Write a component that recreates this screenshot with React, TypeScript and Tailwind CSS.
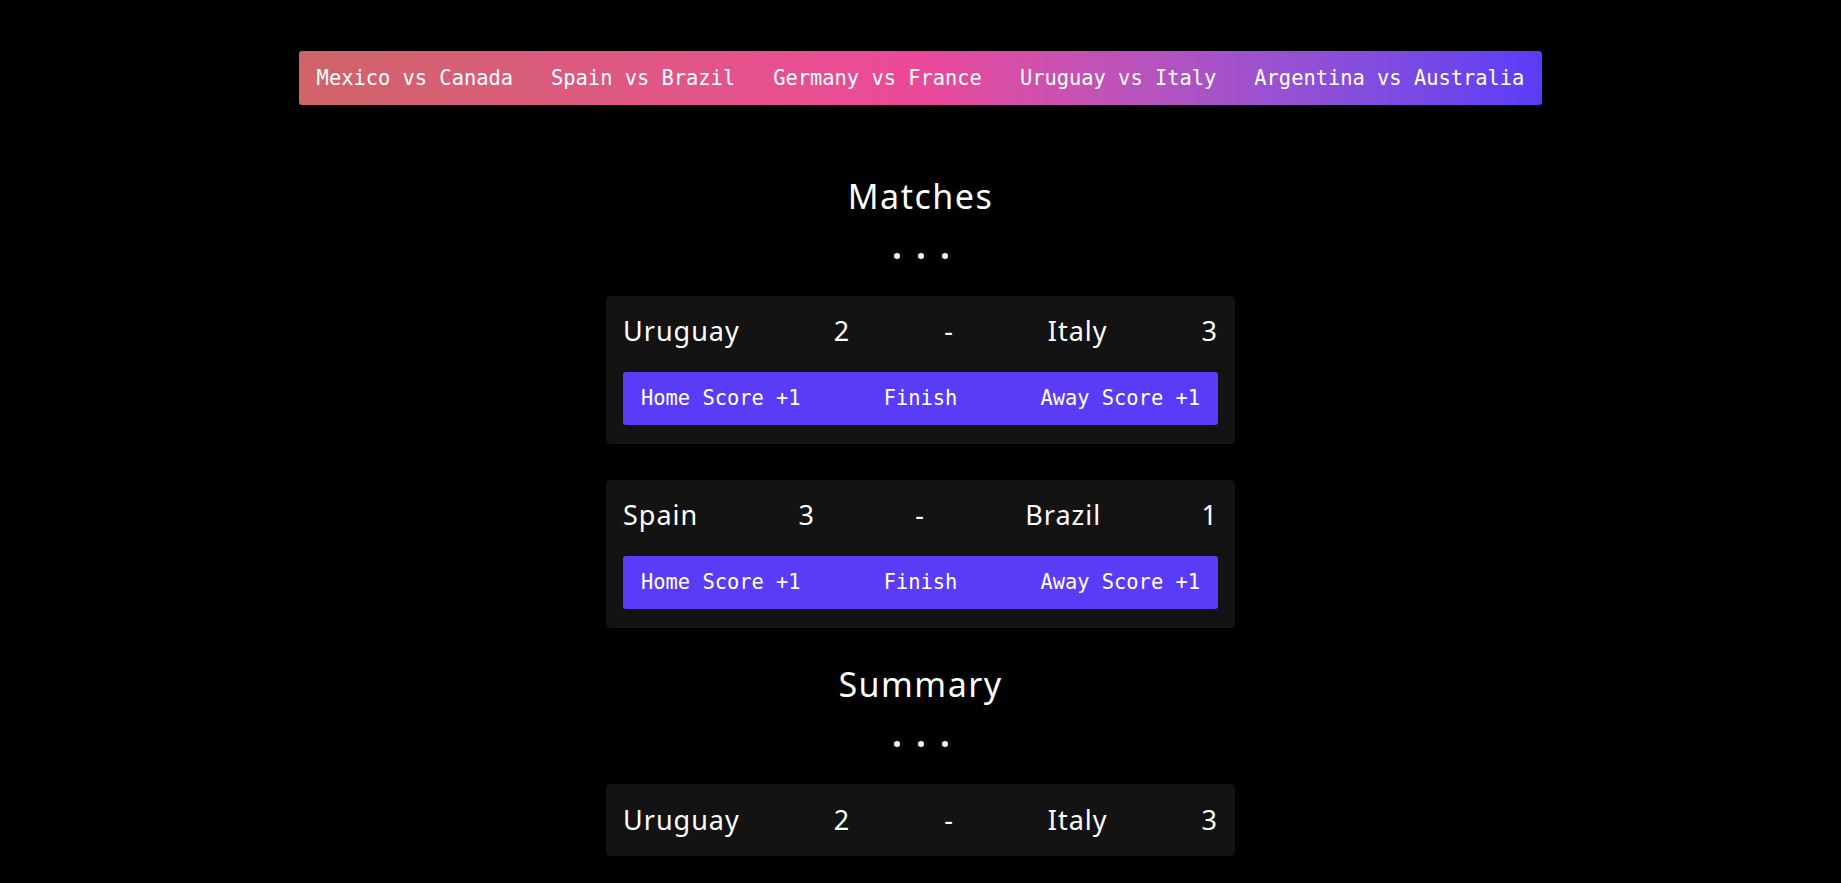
import { useState } from 'react'

interface Match {
  id: number
  home: string
  away: string
  homeScore: number
  awayScore: number
}

const fixtures = [
  'Mexico vs Canada',
  'Spain vs Brazil',
  'Germany vs France',
  'Uruguay vs Italy',
  'Argentina vs Australia',
]

const mono = { fontFamily: '"DejaVu Sans Mono", "Liberation Mono", monospace' }
const sans = { fontFamily: '"Noto Sans", "Open Sans", sans-serif' }

function Dots() {
  return (
    <div className="flex justify-center gap-[18px] h-[6px]">
      <span className="w-[6px] h-[6px] rounded-full bg-white" />
      <span className="w-[6px] h-[6px] rounded-full bg-white" />
      <span className="w-[6px] h-[6px] rounded-full bg-white" />
    </div>
  )
}

function ScoreRow({ m }: { m: Match }) {
  return (
    <div
      className="flex justify-between items-center h-[36px] text-[27px] tracking-[1px] text-white"
      style={sans}
    >
      <span>{m.home}</span>
      <span>{m.homeScore}</span>
      <span>-</span>
      <span>{m.away}</span>
      <span>{m.awayScore}</span>
    </div>
  )
}

export default function App() {
  const [matches, setMatches] = useState<Match[]>([
    { id: 1, home: 'Uruguay', away: 'Italy', homeScore: 2, awayScore: 3 },
    { id: 2, home: 'Spain', away: 'Brazil', homeScore: 3, awayScore: 1 },
  ])

  const bump = (id: number, side: 'homeScore' | 'awayScore') =>
    setMatches((prev) => prev.map((m) => (m.id === id ? { ...m, [side]: m[side] + 1 } : m)))

  const finish = (id: number) => setMatches((prev) => prev.filter((m) => m.id !== id))

  const summary: Match[] = [{ id: 1, home: 'Uruguay', away: 'Italy', homeScore: 2, awayScore: 3 }]

  return (
    <main className="min-h-screen bg-black text-white flex flex-col items-center pt-[51px] pb-10">
      {/* Fixtures bar */}
      <nav
        className="inline-flex items-center gap-[38px] h-[54px] px-[18px] rounded-[3px] bg-gradient-to-r from-[#cf6468] via-[#ec4899] to-[#5b3bf6] text-[20.4px] text-white"
        style={mono}
      >
        {fixtures.map((f) => (
          <span key={f} className="whitespace-nowrap">
            {f}
          </span>
        ))}
      </nav>

      {/* Matches */}
      <h2 className="mt-[67px] text-[34px] leading-[48px] tracking-[1.5px] text-white" style={sans}>
        Matches
      </h2>
      <div className="mt-[33px]">
        <Dots />
      </div>

      <div className="mt-[37px] flex flex-col gap-[36px] w-[629px]">
        {matches.map((m) => (
          <div key={m.id} className="bg-[#131313] rounded-[4px] px-[17px] pt-[17px] pb-[19px]">
            <ScoreRow m={m} />
            <div
              className="mt-[23px] h-[53px] bg-[#5b3cf6] rounded-[3px] flex items-center justify-between px-[18px] text-[20.4px]"
              style={mono}
            >
              <button onClick={() => bump(m.id, 'homeScore')}>Home Score +1</button>
              <button onClick={() => finish(m.id)}>Finish</button>
              <button onClick={() => bump(m.id, 'awayScore')}>Away Score +1</button>
            </div>
          </div>
        ))}
      </div>

      {/* Summary */}
      <h2 className="mt-[32px] text-[34px] leading-[48px] tracking-[1.5px] text-white" style={sans}>
        Summary
      </h2>
      <div className="mt-[33px]">
        <Dots />
      </div>

      <div className="mt-[37px] flex flex-col gap-[36px] w-[629px]">
        {summary.map((m) => (
          <div key={m.id} className="bg-[#131313] rounded-[4px] px-[17px] py-[18px]">
            <ScoreRow m={m} />
          </div>
        ))}
      </div>
    </main>
  )
}
